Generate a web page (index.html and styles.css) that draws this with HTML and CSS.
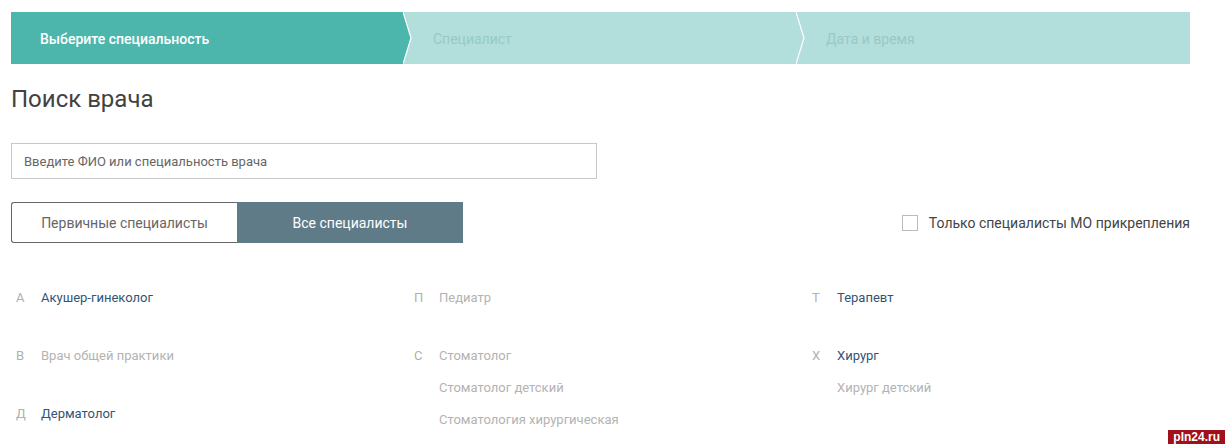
FILE: index.html
```html
<!DOCTYPE html>
<html lang="ru">
<head>
	<meta charset="UTF-8">
	<meta name="viewport" content="width=device-width, initial-scale=1.0">
	<title>Поиск врача</title>
	<link rel="stylesheet" href="styles.css">
</head>
<body>
<div class="page">
	<ul class="steps">
		<li class="step active">
			Выберите специальность
			<svg class="step-arrow" width="10" height="52" viewBox="0 0 10 52">
				<polygon points="0,0 8,26 0,52" fill="#4db6ac"/>
				<polyline points="0,0 8,26 0,52" fill="none" stroke="#fff" stroke-width="1.2"/>
			</svg>
		</li>
		<li class="step">
			Специалист
			<svg class="step-arrow" width="10" height="52" viewBox="0 0 10 52">
				<polyline points="0,0 8,26 0,52" fill="none" stroke="#fff" stroke-width="1.2"/>
			</svg>
		</li>
		<li class="step">Дата и время</li>
	</ul>

	<h1 class="title">Поиск врача</h1>

	<input class="search" type="text" placeholder="Введите ФИО или специальность врача">

	<div class="filters">
		<div class="toggle">
			<button class="toggle-btn">Первичные специалисты</button>
			<button class="toggle-btn selected">Все специалисты</button>
		</div>
		<label class="only-mo">
			<span class="box"></span>
			Только специалисты МО прикрепления
		</label>
	</div>

	<div class="specs">
		<div class="col">
			<div class="group">
				<span class="letter">А</span>
				<ul class="names"><li class="on">Акушер-гинеколог</li></ul>
			</div>
			<div class="group">
				<span class="letter">В</span>
				<ul class="names"><li>Врач общей практики</li></ul>
			</div>
			<div class="group">
				<span class="letter">Д</span>
				<ul class="names"><li class="on">Дерматолог</li></ul>
			</div>
		</div>
		<div class="col">
			<div class="group">
				<span class="letter">П</span>
				<ul class="names"><li>Педиатр</li></ul>
			</div>
			<div class="group">
				<span class="letter">С</span>
				<ul class="names">
					<li>Стоматолог</li>
					<li>Стоматолог детский</li>
					<li>Стоматология хирургическая</li>
				</ul>
			</div>
		</div>
		<div class="col">
			<div class="group">
				<span class="letter">Т</span>
				<ul class="names"><li class="on">Терапевт</li></ul>
			</div>
			<div class="group">
				<span class="letter">Х</span>
				<ul class="names">
					<li class="on">Хирург</li>
					<li>Хирург детский</li>
				</ul>
			</div>
		</div>
	</div>
</div>
<div class="mark">pln24.ru</div>
</body>
</html>
```

FILE: styles.css
```css
html, body {
	margin: 0;
	padding: 0;
	background: #fff;
	font-family: Roboto, "Liberation Sans", sans-serif;
	color: #444;
	overflow: hidden;
}
.page {
	width: 1179px;
	padding: 12px 0 0 11px;
}
.steps {
	display: flex;
	margin: 0;
	padding: 0;
	list-style: none;
	height: 52px;
	background: #b2dfdb;
}
.step {
	position: relative;
	flex: 1;
	padding-left: 29px;
	line-height: 54px;
	font-size: 14px;
	color: #98c9c4;
}
.step.active {
	background: #4db6ac;
	color: #fff;
	font-weight: 500;
}
.step-arrow {
	position: absolute;
	top: 0;
	right: -9px;
	z-index: 1;
}
.title {
	margin: 20px 0 0;
	font-size: 24px;
	font-weight: 400;
	line-height: 30px;
	color: #424242;
}
.search {
	display: block;
	box-sizing: border-box;
	width: 586px;
	height: 36px;
	margin-top: 29px;
	padding: 0 12px;
	border: 1px solid #c8c8c8;
	font-family: inherit;
	font-size: 13px;
	color: #555;
	outline: none;
}
.search::placeholder {
	color: #666;
}
.filters {
	display: flex;
	align-items: center;
	justify-content: space-between;
	margin-top: 23px;
}
.toggle {
	display: flex;
}
.toggle-btn {
	box-sizing: border-box;
	width: 226px;
	height: 41px;
	margin: 0;
	border: 1px solid #5f7b88;
	background: #fff;
	font-family: inherit;
	font-size: 14px;
	color: #666;
	cursor: pointer;
}
.toggle-btn:first-child {
	border-radius: 3px 0 0 3px;
	border-color: #666;
	border-right: none;
}
.toggle-btn.selected {
	background: #5f7b88;
	color: #fff;
}
.only-mo {
	display: flex;
	align-items: center;
	gap: 11px;
	font-size: 14px;
	color: #444;
}
.only-mo .box {
	box-sizing: border-box;
	width: 16px;
	height: 16px;
	border: 1px solid #bbb;
	background: #fff;
}
.specs {
	display: flex;
	margin-top: 39px;
}
.col {
	flex: 0 0 398px;
	display: flex;
	flex-direction: column;
	gap: 26px;
}
.col:first-child {
	flex-basis: 402px;
}
.group {
	display: flex;
}
.letter {
	width: 30px;
	padding-left: 5px;
	box-sizing: border-box;
	line-height: 32px;
	font-size: 13px;
	color: #b0b0b0;
}
.col:nth-child(n+2) .letter {
	padding-left: 1px;
	width: 26px;
}
.names {
	margin: 0;
	padding: 0;
	list-style: none;
}
.names li {
	line-height: 32px;
	font-size: 13px;
	color: #b3b3b3;
}
.names li.on {
	color: #2f5577;
}
.mark {
	position: absolute;
	right: 0;
	bottom: 0;
	padding: 0 5px;
	height: 14px;
	line-height: 15px;
	background: #a0111b;
	color: #fff;
	font-family: "Liberation Sans", sans-serif;
	font-weight: bold;
	font-size: 12px;
}
```
